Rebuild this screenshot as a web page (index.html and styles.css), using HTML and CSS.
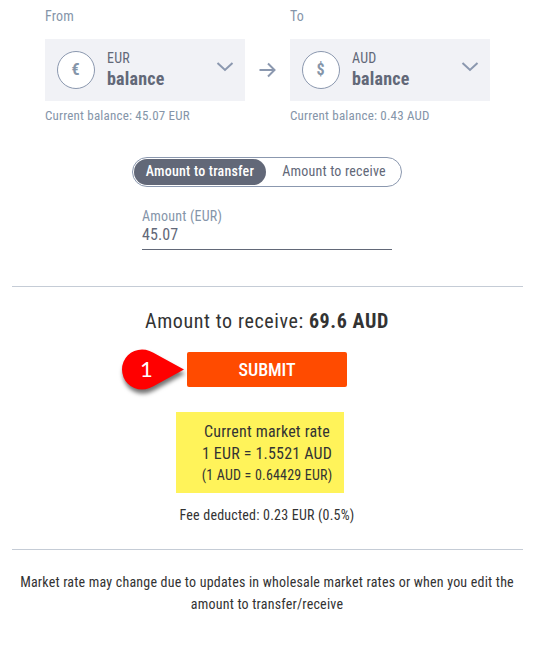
FILE: index.html
```html
<!DOCTYPE html>
<html lang="en">

<head>
    <meta charset="UTF-8">
    <meta name="viewport" content="width=device-width, initial-scale=1.0">
    <title>Currency transfer</title>
    <link rel="stylesheet" href="styles.css">
</head>

<body>
    <div class="transfer">
        <div class="accounts">
            <div class="account">
                <div class="account-label">From</div>
                <div class="select">
                    <span class="coin">€</span>
                    <div class="select-text">
                        <span class="code">EUR</span>
                        <span class="name">balance</span>
                    </div>
                    <svg class="chevron" width="18" height="12" viewBox="0 0 18 12">
                        <path d="M1.500 2l7.500 7 7.500-7" />
                    </svg>
                </div>
                <div class="current">Current balance: 45.07 EUR</div>
            </div>
            <svg class="arrow" width="18" height="16" viewBox="0 0 18 16">
                <path d="M.5 8h15M9 1.500L15.500 8L9 14.500" />
            </svg>
            <div class="account">
                <div class="account-label">To</div>
                <div class="select">
                    <span class="coin">$</span>
                    <div class="select-text">
                        <span class="code">AUD</span>
                        <span class="name">balance</span>
                    </div>
                    <svg class="chevron" width="18" height="12" viewBox="0 0 18 12">
                        <path d="M1.500 2l7.500 7 7.500-7" />
                    </svg>
                </div>
                <div class="current">Current balance: 0.43 AUD</div>
            </div>
        </div>

        <div class="toggle">
            <span class="option active">Amount to transfer</span>
            <span class="option">Amount to receive</span>
        </div>

        <div class="field">
            <div class="field-label">Amount (EUR)</div>
            <div class="field-value">45.07</div>
        </div>

        <div class="summary">
            <div class="total">Amount to receive: <b>69.6 AUD</b></div>
            <div class="submit">
                <span class="submit-text">SUBMIT</span>
                <!-- step marker -->
                <div class="marker">
                    <svg width="74" height="56" viewBox="0 0 74 56">
                        <path d="M66 25.500L39.500 11C34 7.500 29 5.500 24 5.500a20 20 0 0 0 0 40c5 0 10-2 15.500-5.500z" />
                    </svg>
                    <span class="marker-number">1</span>
                </div>
            </div>
            <div class="rate">
                <div class="rate-line">Current market rate</div>
                <div class="rate-line">1 EUR = 1.5521 AUD</div>
                <div class="rate-small">(1 AUD = 0.64429 EUR)</div>
            </div>
            <div class="fee">Fee deducted: 0.23 EUR (0.5%)</div>
        </div>

        <div class="note">
            <div class="note-line">Market rate may change due to updates in wholesale market rates or when you edit the</div>
            <div class="note-line">amount to transfer/receive</div>
        </div>
    </div>
</body>

</html>
```
FILE: styles.css
```css
body {
    margin: 0;
    background: #fff;
    color: #333;
    font-family: "Roboto Condensed", Roboto, sans-serif;
    font-stretch: 75%;
    font-size: 14px;
    letter-spacing: 0.2px;
    white-space: nowrap;
}

.transfer {
    display: flex;
    flex-direction: column;
    align-items: center;
    width: 510px;
    margin-left: 12px;
}

.accounts {
    display: flex;
    justify-content: space-between;
    width: 445px;
    margin-left: 1px;
    color: #8595a9;
}

.account {
    width: 200px;
}

.account-label {
    height: 33px;
    padding-top: 6px;
    line-height: 20px;
    box-sizing: border-box;
    margin-bottom: 6px;
}

.select {
    display: flex;
    align-items: center;
    height: 62px;
    padding: 0 11px 0 12px;
    box-sizing: border-box;
    background: #f1f2f6;
}

.coin {
    width: 36px;
    height: 36px;
    border: 1px solid #8b98af;
    border-radius: 50%;
    background: #fff;
    font-size: 16px;
    font-weight: bold;
    letter-spacing: 0;
    line-height: 36px;
    text-align: center;
    text-indent: -1px;
}

.select-text {
    flex: 1;
    margin: -2px 0 0 12px;
    color: #626878;
}

.code,
.name {
    display: block;
}

.code {
    line-height: 20px;
}

.name {
    font-size: 18px;
    font-weight: bold;
    line-height: 22px;
}

.chevron {
    margin-bottom: 7px;
}

.chevron path,
.arrow path {
    fill: none;
    stroke: #8b98af;
    stroke-width: 2;
}

.arrow {
    margin-top: 62px;
}

.current {
    padding-top: 5px;
    font-size: 13px;
    line-height: 20px;
}

.toggle {
    display: flex;
    width: 270px;
    height: 30px;
    margin-top: 31px;
    padding: 1px;
    border: 1px solid #8b98af;
    border-radius: 15px;
    box-sizing: border-box;
}

.option {
    width: 134px;
    color: #626878;
    line-height: 25px;
    text-align: center;
    text-indent: 2px;
}

.active {
    flex: none;
    width: 132px;
    border-radius: 13px;
    background: #626878;
    color: #fff;
    font-weight: 500;
    text-indent: 0;
}

.field {
    width: 250px;
    margin-top: 20px;
    border-bottom: 1px solid #626878;
}

.field-label {
    color: #8595a9;
    line-height: 18px;
}

.field-value {
    height: 24px;
    color: #626878;
    font-size: 16px;
    letter-spacing: 0.1px;
    line-height: 19px;
}

.summary {
    display: flex;
    flex-direction: column;
    align-self: flex-start;
    align-items: center;
    width: 511px;
    height: 264px;
    margin-top: 36px;
    padding-right: 1px;
    border: solid #c5ccd6;
    border-width: 1px 0;
    box-sizing: border-box;
}

.total {
    margin-top: 20px;
    font-size: 20px;
    letter-spacing: 0.6px;
    line-height: 28px;
}

.submit {
    position: relative;
    width: 160px;
    height: 35px;
    margin-top: 17px;
    border-radius: 2px;
    background: #ff4b00;
    color: #fff;
    font-size: 18px;
    font-weight: 500;
    letter-spacing: -0.1px;
    line-height: 36px;
    text-align: center;
}

.marker {
    position: absolute;
    top: -8px;
    left: -69px;
}

.marker svg {
    display: block;
    filter: drop-shadow(1px 4px 2px rgba(0, 0, 0, 0.55));
}

.marker path {
    fill: #f00;
}

.marker-number {
    position: absolute;
    top: 7px;
    left: 22px;
    font-family: Lato, sans-serif;
    font-stretch: normal;
    font-size: 22px;
    font-weight: normal;
}

.rate {
    width: 168px;
    height: 81px;
    margin: 25px 14px 0 0;
    padding: 9px 0 0 14px;
    box-sizing: border-box;
    background: #fff35a;
    font-size: 16px;
    line-height: 22px;
    text-align: center;
}

.rate-small {
    font-size: 14px;
    line-height: 21px;
}

.fee {
    margin-top: 12px;
    line-height: 20px;
}

.note {
    margin-top: 21px;
    line-height: 22px;
    text-align: center;
}
```
